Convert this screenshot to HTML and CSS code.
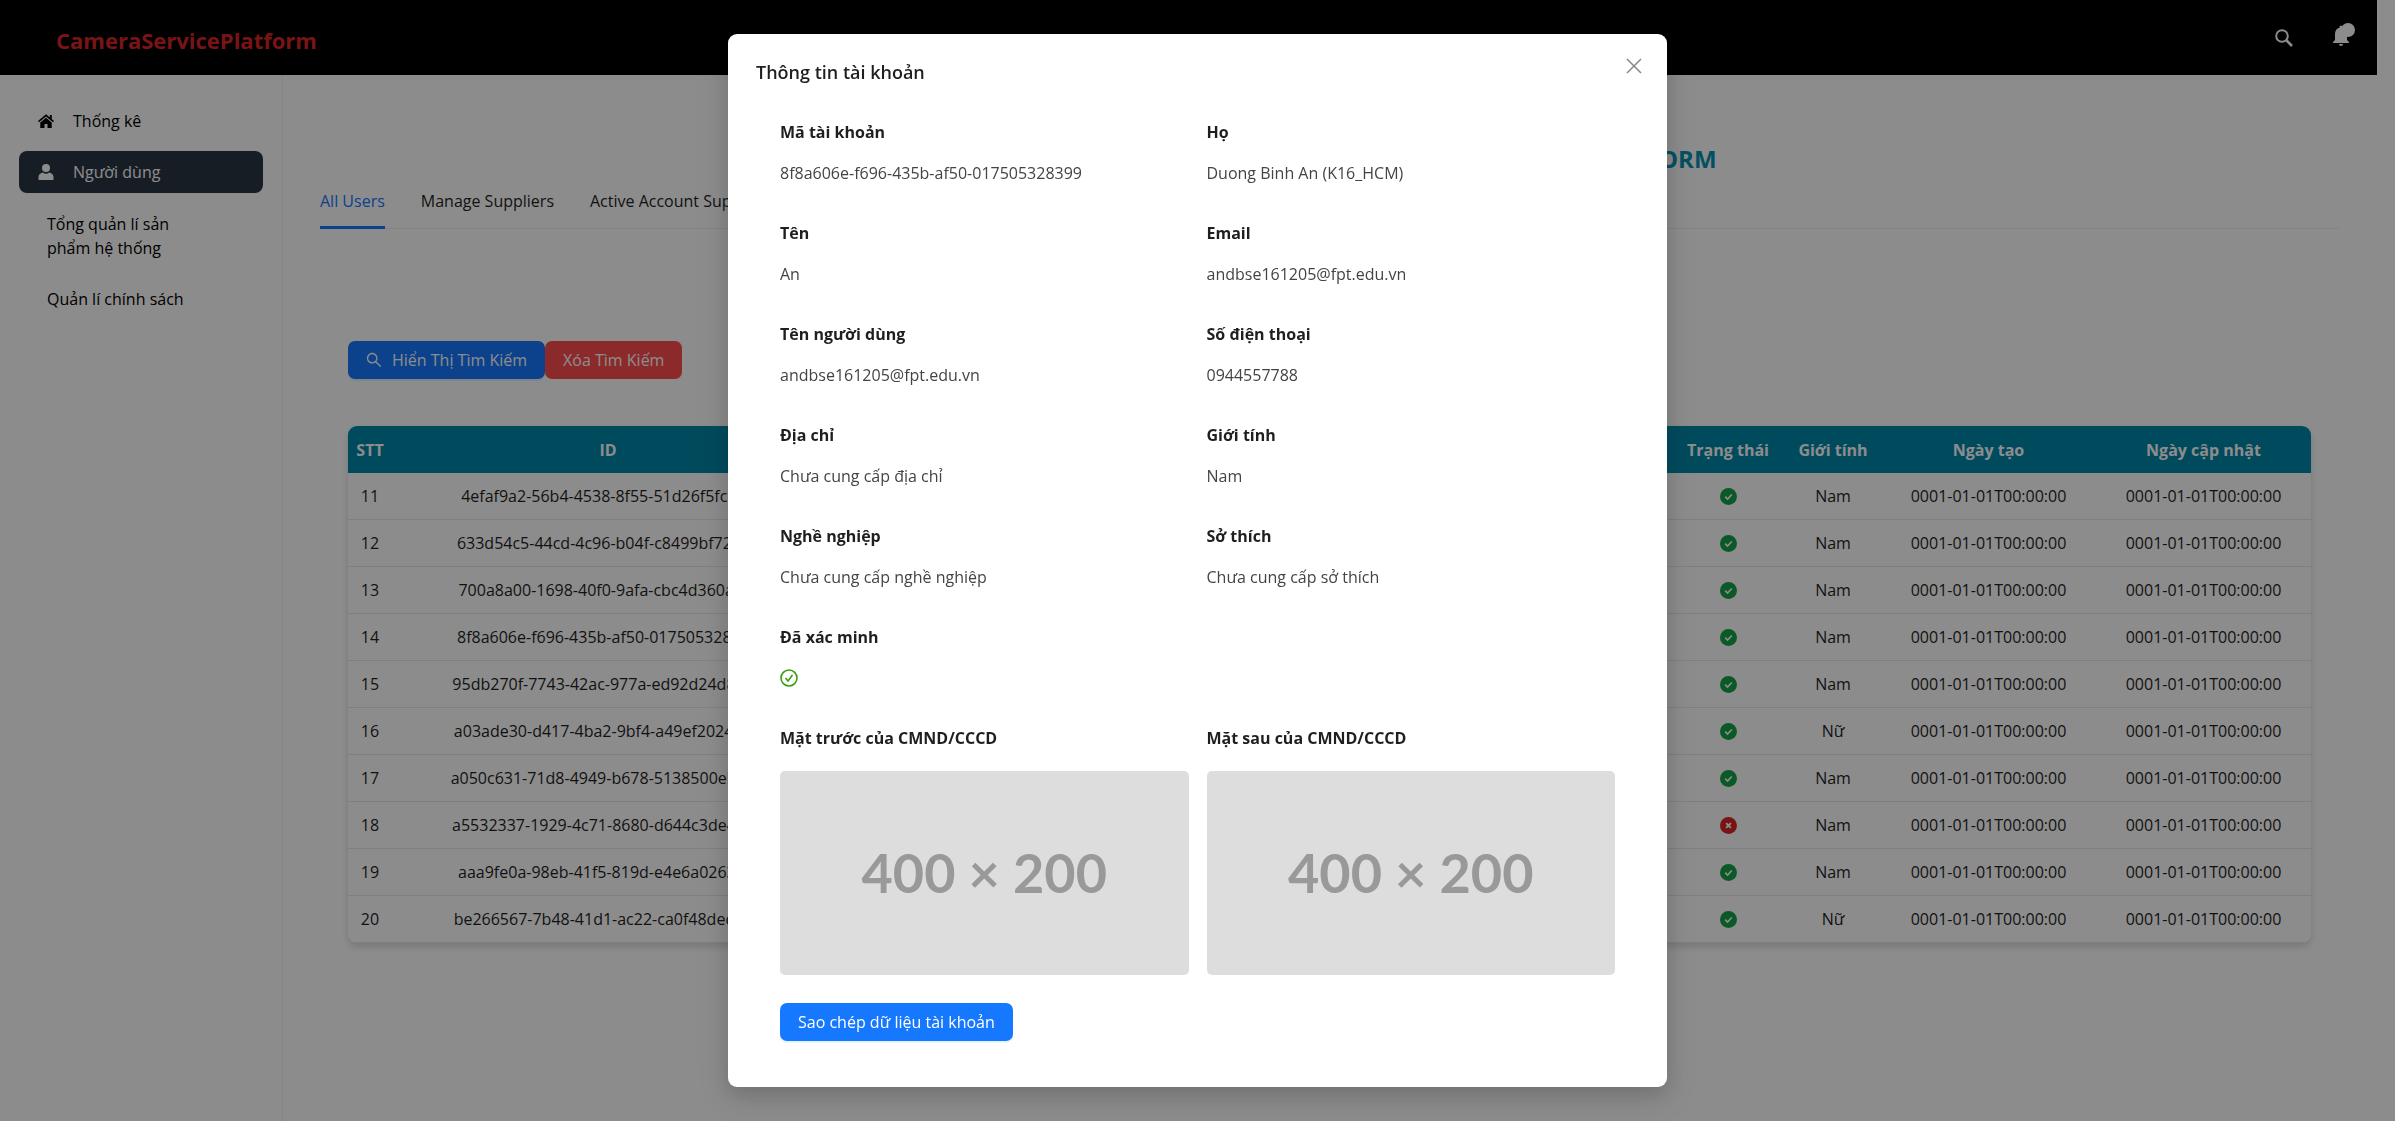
FILE: index.html
```html
<!DOCTYPE html>
<html lang="vi">
<head>
<meta charset="utf-8">
<meta name="viewport" content="width=device-width, initial-scale=1">
<title>CameraServicePlatform</title>
<link rel="stylesheet" href="styles.css">
</head>
<body>
<svg class="sprite" aria-hidden="true">
  <symbol id="i-search" viewBox="64 64 896 896"><path fill="currentColor" d="M909.6 854.5L649.900 594.800C690.200 542.700 712 479 712 412c0-80.200-31.300-155.400-87.900-212.100-56.600-56.700-132-87.900-212.100-87.900s-155.500 31.300-212.100 87.900C143.200 256.500 112 331.800 112 412c0 80.100 31.300 155.500 87.900 212.100C256.500 680.800 331.800 712 412 712c67 0 130.600-21.800 182.700-62l259.700 259.600a8.200 8.200 0 0 0 11.600 0l43.600-43.500a8.200 8.200 0 0 0 0-11.600zM570.400 570.400C528 612.700 471.800 636 412 636s-116-23.300-158.400-65.600C211.300 528 188 471.800 188 412s23.300-116.100 65.600-158.400C296 211.300 352.200 188 412 188s116.100 23.200 158.400 65.600S636 352.200 636 412s-23.300 116.100-65.600 158.400z"/></symbol>
  <symbol id="i-check" viewBox="0 0 18 18"><circle cx="9" cy="9" r="9" fill="currentColor"/><path d="M5.500 9.200l2.500 2.500 4.500-4.800" fill="none" stroke="#fff" stroke-width="1.700"/></symbol>
  <symbol id="i-times" viewBox="0 0 18 18"><circle cx="9" cy="9" r="9" fill="currentColor"/><path d="M6.500 6.500l5 5M11.500 6.500l-5 5" fill="none" stroke="#fff" stroke-width="2"/></symbol>
</svg>

<header class="topbar">
  <a class="brand" href="#">CameraServicePlatform</a>
  <div class="actions">
    <button class="icon-btn" type="button" aria-label="Search"><svg class="ico-md" viewBox="0 0 18 18"><circle cx="7" cy="7" r="5.800" fill="none" stroke="currentColor" stroke-width="2"/><path d="M11.500 11.500l5.500 5.500" stroke="currentColor" stroke-width="2.600"/></svg></button>
    <button class="icon-btn" type="button" aria-label="Notifications"><svg class="ico-bell" viewBox="0 0 22 24"><path fill="currentColor" d="M0 20v-1l2-2v-6c0-3 1.500-5.500 4.500-6.200V4a1.500 1.500 0 0 1 3 0v.8c3 .7 4.500 3.200 4.500 6.200v6l2 2v1zM6 21h4a2 2 0 0 1-4 0z"/><circle cx="15" cy="7" r="7" fill="currentColor"/></svg></button>
  </div>
</header>

<div class="shell">
  <nav class="sidebar">
    <a class="nav-item" href="#"><svg class="ico-sm" viewBox="0 0 16 16"><path fill="currentColor" d="M8 1.300L0 8l1 1.200L8 3.400l7 5.800L16 8l-2.200-1.900V2h-2v2.400zM8 4.700L2.300 9.400V15h4.200v-4h3v4h4.200V9.400z"/></svg>Thống kê</a>
    <a class="nav-item active" href="#"><svg class="ico-sm" viewBox="0 0 16 16"><circle cx="8" cy="4" r="4" fill="currentColor"/><path fill="currentColor" d="M4.700 8.500a5.500 5.500 0 0 0 6.600 0C14 9 15.500 11 15.500 13v3H.5v-3c0-2 1.500-4 4.200-4.500z"/></svg>Người dùng</a>
    <a class="nav-item plain" href="#">Tổng quản lí sản phẩm hệ thống</a>
    <a class="nav-item plain" href="#">Quản lí chính sách</a>
  </nav>

  <main class="content">
    <h1 class="title">TRANG QUẢN LÍ NGƯỜI DÙNG TRÊN CAMERA SERVICE PLATFORM</h1>
    <div class="tabs" role="tablist">
      <button class="tab on" type="button" role="tab" aria-selected="true">All Users</button>
      <button class="tab" type="button" role="tab" aria-selected="false">Manage Suppliers</button>
      <button class="tab" type="button" role="tab" aria-selected="false">Active Account Suppliers</button>
    </div>
    <section class="panel">
      <div class="tools">
        <button class="btn primary" type="button"><svg class="ico-sm" aria-hidden="true"><use href="#i-search"/></svg>Hiển Thị Tìm Kiếm</button>
        <button class="btn danger" type="button">Xóa Tìm Kiếm</button>
      </div>
      <table class="users">
        <colgroup><col class="c-no"><col class="c-id"><col><col class="c-status"><col class="c-sex"><col class="c-date"><col class="c-date"></colgroup>
        <thead><tr><th>STT</th><th>ID</th><th>Email</th><th>Trạng thái</th><th>Giới tính</th><th>Ngày tạo</th><th>Ngày cập nhật</th></tr></thead>
        <tbody>
          <tr><td>11</td><td>4efaf9a2-56b4-4538-8f55-51d26f5fc210</td><td></td><td><svg class="ok"><use href="#i-check"/></svg></td><td>Nam</td><td>0001-01-01T00:00:00</td><td>0001-01-01T00:00:00</td></tr>
          <tr><td>12</td><td>633d54c5-44cd-4c96-b04f-c8499bf72a10</td><td></td><td><svg class="ok"><use href="#i-check"/></svg></td><td>Nam</td><td>0001-01-01T00:00:00</td><td>0001-01-01T00:00:00</td></tr>
          <tr><td>13</td><td>700a8a00-1698-40f0-9afa-cbc4d360a1f2</td><td></td><td><svg class="ok"><use href="#i-check"/></svg></td><td>Nam</td><td>0001-01-01T00:00:00</td><td>0001-01-01T00:00:00</td></tr>
          <tr><td>14</td><td>8f8a606e-f696-435b-af50-017505328399</td><td></td><td><svg class="ok"><use href="#i-check"/></svg></td><td>Nam</td><td>0001-01-01T00:00:00</td><td>0001-01-01T00:00:00</td></tr>
          <tr><td>15</td><td>95db270f-7743-42ac-977a-ed92d24d80b3</td><td></td><td><svg class="ok"><use href="#i-check"/></svg></td><td>Nam</td><td>0001-01-01T00:00:00</td><td>0001-01-01T00:00:00</td></tr>
          <tr><td>16</td><td>a03ade30-d417-4ba2-9bf4-a49ef2024bd0</td><td></td><td><svg class="ok"><use href="#i-check"/></svg></td><td>Nữ</td><td>0001-01-01T00:00:00</td><td>0001-01-01T00:00:00</td></tr>
          <tr><td>17</td><td>a050c631-71d8-4949-b678-5138500ebdd8</td><td></td><td><svg class="ok"><use href="#i-check"/></svg></td><td>Nam</td><td>0001-01-01T00:00:00</td><td>0001-01-01T00:00:00</td></tr>
          <tr><td>18</td><td>a5532337-1929-4c71-8680-d644c3de4b90</td><td></td><td><svg class="bad"><use href="#i-times"/></svg></td><td>Nam</td><td>0001-01-01T00:00:00</td><td>0001-01-01T00:00:00</td></tr>
          <tr><td>19</td><td>aaa9fe0a-98eb-41f5-819d-e4e6a0263f1c</td><td></td><td><svg class="ok"><use href="#i-check"/></svg></td><td>Nam</td><td>0001-01-01T00:00:00</td><td>0001-01-01T00:00:00</td></tr>
          <tr><td>20</td><td>be266567-7b48-41d1-ac22-ca0f48ded5a0</td><td></td><td><svg class="ok"><use href="#i-check"/></svg></td><td>Nữ</td><td>0001-01-01T00:00:00</td><td>0001-01-01T00:00:00</td></tr>
        </tbody>
      </table>
    </section>
  </main>
</div>

<div class="mask">
  <div class="modal" role="dialog" aria-modal="true" aria-labelledby="dlg">
    <div class="modal-head">
      <h2 id="dlg">Thông tin tài khoản</h2>
      <button class="close" type="button" aria-label="Close"><svg viewBox="0 0 16 16"><path d="M1 1l14 14M15 1L1 15" stroke="currentColor" stroke-width="1.500"/></svg></button>
    </div>
    <div class="modal-body">
      <dl class="fields">
        <div><dt>Mã tài khoản</dt><dd>8f8a606e-f696-435b-af50-017505328399</dd></div>
        <div><dt>Họ</dt><dd>Duong Binh An (K16_HCM)</dd></div>
        <div><dt>Tên</dt><dd>An</dd></div>
        <div><dt>Email</dt><dd>andbse161205@fpt.edu.vn</dd></div>
        <div><dt>Tên người dùng</dt><dd>andbse161205@fpt.edu.vn</dd></div>
        <div><dt>Số điện thoại</dt><dd>0944557788</dd></div>
        <div><dt>Địa chỉ</dt><dd>Chưa cung cấp địa chỉ</dd></div>
        <div><dt>Giới tính</dt><dd>Nam</dd></div>
        <div><dt>Nghề nghiệp</dt><dd>Chưa cung cấp nghề nghiệp</dd></div>
        <div><dt>Sở thích</dt><dd>Chưa cung cấp sở thích</dd></div>
        <div class="wide"><dt>Đã xác minh</dt><dd class="state"><svg class="verified" viewBox="0 0 18 18" fill="none" stroke="currentColor" stroke-width="1.600"><circle cx="9" cy="9" r="8"/><path d="M5.500 9l2.500 3 4.500-6"/></svg></dd></div>
        <div class="shot"><dt>Mặt trước của CMND/CCCD</dt><dd class="photo">400 × 200</dd></div>
        <div class="shot"><dt>Mặt sau của CMND/CCCD</dt><dd class="photo">400 × 200</dd></div>
      </dl>
      <button class="btn primary" type="button">Sao chép dữ liệu tài khoản</button>
    </div>
  </div>
</div>
</body>
</html>
```

FILE: styles.css
```css
* { box-sizing: border-box; }
body {
  margin: 0;
  min-height: 100vh;
  background: #fff;
  color: #1f1f1f;
  font: 16px/24px "Open Sans", "Noto Sans", sans-serif;
}
button { font: inherit; cursor: pointer; border: 0; padding: 0; background: none; color: inherit; }
a { color: inherit; text-decoration: none; }
.sprite { display: none; }

.topbar {
  display: flex;
  align-items: center;
  justify-content: space-between;
  height: 75px;
  margin-right: 18px;
  padding: 4px 22px 0 56px;
  background: #000;
}
.brand { color: #dc2626; font-size: 22px; font-weight: 700; }
.actions { display: flex; align-items: center; gap: 40px; color: #fff; }
.icon-btn { display: flex; }
.ico-md { width: 18px; height: 18px; margin-bottom: 4px; }
.ico-bell { width: 22px; height: 24px; margin-bottom: 10px; }
.ico-sm { width: 16px; height: 16px; flex: none; }

.shell { display: flex; min-height: calc(100vh - 75px); }
.sidebar {
  flex: none;
  width: 283px;
  padding: 25px 19px;
  display: flex;
  flex-direction: column;
  gap: 9px;
  border-right: 1px solid #f5f5f5;
}
.nav-item {
  display: flex;
  align-items: center;
  gap: 19px;
  padding: 9px 19px;
  border-radius: 8px;
  color: #000;
}
.nav-item.active { background: #2b3544; color: #fff; }
.nav-item.plain { padding: 10px 76px 10px 28px; }
.nav-item.plain + .plain { padding-top: 8px; padding-right: 28px; }

.content { flex: 1; min-width: 0; padding: 64px 56px 0 37px; }
.title {
  margin: 0;
  color: #0891b2;
  font-size: 24px;
  line-height: 40px;
  font-weight: 700;
  text-align: center;
  white-space: nowrap;
}
.tabs { display: flex; gap: 36px; border-bottom: 1px solid #f0f0f0; }
.tab { padding: 10px 0 13px; border-bottom: 3px solid transparent; margin-bottom: -1px; white-space: nowrap; }
.tab.on { color: #1677ff; border-color: #1677ff; }

.panel { padding: 112px 28px 0; }
.tools { display: flex; margin-bottom: 47px; }
.btn {
  display: inline-flex;
  align-items: center;
  gap: 10px;
  height: 38px;
  padding: 0 18px;
  border-radius: 7px;
  color: #fff;
}
.btn.primary { background: #1677ff; box-shadow: 0 2px 0 rgba(5, 145, 255, .1); }
.btn.danger { background: #ff4d4f; }

.users {
  width: 100%;
  table-layout: fixed;
  border-collapse: separate;
  border-spacing: 0;
  border-radius: 9px;
  overflow: hidden;
  text-align: center;
  box-shadow: 0 4px 7px rgba(0, 0, 0, .14);
}
.users th { height: 47px; padding: 0; background: #0088aa; color: #fff; font-weight: 700; }
.users td { height: 47px; padding: 0; border-bottom: 1px solid #e8e8e8; white-space: nowrap; }
.users svg { display: block; width: 17px; height: 17px; margin: 0 auto; }
.c-no { width: 44px; }
.c-id { width: 432px; }
.c-status { width: 114px; }
.c-sex { width: 96px; }
.c-date { width: 215px; }
.ok { color: #16a34a; }
.bad { color: #dc2626; }

.mask {
  position: fixed;
  inset: 0;
  overflow: auto;
  padding: 34px 0;
  background: rgba(0, 0, 0, .45);
}
.modal {
  width: min(939px, 100%);
  margin: 0 auto;
  padding: 24px 28px 46px;
  background: #fff;
  border-radius: 9px;
  box-shadow: 0 7px 20px rgba(0, 0, 0, .14), 0 10px 34px 8px rgba(0, 0, 0, .08);
}
.modal-head { display: flex; align-items: flex-start; justify-content: space-between; }
.modal-head h2 { margin: 1px 0; font-size: 18px; line-height: 26px; font-weight: 600; }
.close { display: flex; margin-right: -3px; color: #888; }
.close svg { width: 16px; height: 16px; }
.modal-body { padding: 34px 24px 0; }
.fields {
  display: grid;
  grid-template-columns: 1fr 1fr;
  gap: 36px 18px;
  margin: 0 0 28px;
}
.fields .wide { grid-column: 1 / -1; }
dt { margin-bottom: 17px; font-weight: 700; }
.shot dt { margin-bottom: 21px; }
dd { margin: 0; color: #444; }
.fields dd { min-height: 24px; }
.fields .state { display: flex; align-items: center; }
.verified { width: 18px; height: 18px; color: #389e0d; }
.fields .photo {
  display: grid;
  place-items: center;
  aspect-ratio: 2 / 1;
  border-radius: 5px;
  background: #ddd;
  color: #999;
  font: 700 54px/1 Lato, sans-serif;
}
```
